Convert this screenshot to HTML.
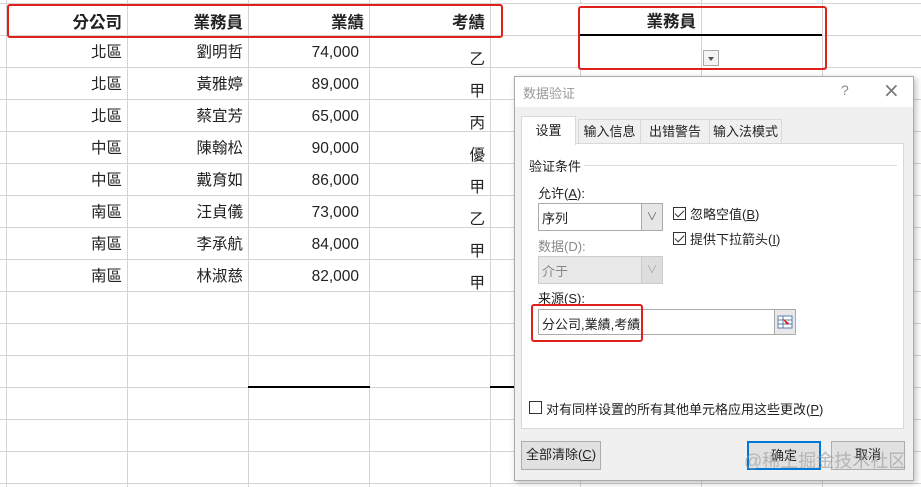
<!DOCTYPE html>
<html><head><meta charset="utf-8"><style>
*{margin:0;padding:0;box-sizing:border-box}
body{width:921px;height:487px;background:#fff;position:relative;overflow:hidden;font-family:"Liberation Sans","Noto Sans CJK TC",sans-serif;color:#222}
.a{position:absolute}
.vl{position:absolute;width:1px;background:#d4d4d4;top:0;height:487px}
.hl{position:absolute;height:1px;background:#d4d4d4;left:0;width:921px}
.c{position:absolute;text-align:right;font-size:15.5px;height:32px;line-height:32px;padding-right:5px}
.h{font-weight:bold;font-size:16.5px}
.d{font-family:"Liberation Sans","Noto Sans CJK SC",sans-serif;font-size:13px;color:#222}
.btn{position:absolute;background:#e1e1e1;border:1px solid #adadad;font-size:13px;text-align:center;line-height:26px}
.cb{position:absolute;width:13px;height:13px;border:1px solid #333;background:#fff}
.cb.k::after{content:"";position:absolute;left:3px;top:0px;width:4px;height:8px;border:solid #333;border-width:0 1.5px 1.5px 0;transform:rotate(45deg)}
.red{position:absolute;border:2.5px solid #e0201b;border-radius:3px}
</style></head><body>
<div class="vl" style="left:6px"></div><div class="vl" style="left:127px"></div><div class="vl" style="left:248px"></div><div class="vl" style="left:369px"></div><div class="vl" style="left:490px"></div><div class="vl" style="left:580px"></div><div class="vl" style="left:701px"></div><div class="vl" style="left:822px"></div>
<div class="hl" style="top:3px"></div><div class="hl" style="top:35px"></div><div class="hl" style="top:67px"></div><div class="hl" style="top:99px"></div><div class="hl" style="top:131px"></div><div class="hl" style="top:163px"></div><div class="hl" style="top:195px"></div><div class="hl" style="top:227px"></div><div class="hl" style="top:259px"></div><div class="hl" style="top:291px"></div><div class="hl" style="top:323px"></div><div class="hl" style="top:355px"></div><div class="hl" style="top:387px"></div><div class="hl" style="top:419px"></div><div class="hl" style="top:451px"></div><div class="hl" style="top:483px"></div>
<div class="a" style="left:248px;top:386px;width:122px;height:2px;background:#000"></div>
<div class="a" style="left:490px;top:386px;width:24px;height:2px;background:#000"></div>
<div class="a" style="left:580px;top:35px;width:242px;height:33px;background:#fff"></div>
<div class="a" style="left:580px;top:4px;width:242px;height:31px;background:#fff"></div>
<div class="a" style="left:701px;top:4px;width:1px;height:64px;background:#d4d4d4"></div>
<div class="a" style="left:580px;top:34px;width:242px;height:2px;background:#000"></div>

<div class="c h" style="left:6px;top:7px;width:121px">分公司</div>
<div class="c h" style="left:127px;top:7px;width:121px">業務員</div>
<div class="c h" style="left:248px;top:7px;width:121px">業績</div>
<div class="c h" style="left:369px;top:7px;width:121px">考績</div>
<div class="c h" style="left:580px;top:6px;width:121px">業務員</div>
<div class="a" style="left:703px;top:50px;width:16px;height:16px;border:1px solid #aaa;background:#f4f4f4"><div class="a" style="left:4px;top:6px;border:3.5px solid transparent;border-top:4px solid #555;border-bottom:0"></div></div>

<div class="c" style="left:6px;top:37px;width:121px">北區</div><div class="c" style="left:127px;top:37px;width:121px">劉明哲</div><div class="c" style="left:248px;top:37px;width:121px;padding-right:10px">74,000</div><div class="c" style="left:369px;top:44px;width:121px">乙</div>
<div class="c" style="left:6px;top:69px;width:121px">北區</div><div class="c" style="left:127px;top:69px;width:121px">黃雅婷</div><div class="c" style="left:248px;top:69px;width:121px;padding-right:10px">89,000</div><div class="c" style="left:369px;top:76px;width:121px">甲</div>
<div class="c" style="left:6px;top:101px;width:121px">北區</div><div class="c" style="left:127px;top:101px;width:121px">蔡宜芳</div><div class="c" style="left:248px;top:101px;width:121px;padding-right:10px">65,000</div><div class="c" style="left:369px;top:108px;width:121px">丙</div>
<div class="c" style="left:6px;top:133px;width:121px">中區</div><div class="c" style="left:127px;top:133px;width:121px">陳翰松</div><div class="c" style="left:248px;top:133px;width:121px;padding-right:10px">90,000</div><div class="c" style="left:369px;top:140px;width:121px">優</div>
<div class="c" style="left:6px;top:165px;width:121px">中區</div><div class="c" style="left:127px;top:165px;width:121px">戴育如</div><div class="c" style="left:248px;top:165px;width:121px;padding-right:10px">86,000</div><div class="c" style="left:369px;top:172px;width:121px">甲</div>
<div class="c" style="left:6px;top:197px;width:121px">南區</div><div class="c" style="left:127px;top:197px;width:121px">汪貞儀</div><div class="c" style="left:248px;top:197px;width:121px;padding-right:10px">73,000</div><div class="c" style="left:369px;top:204px;width:121px">乙</div>
<div class="c" style="left:6px;top:229px;width:121px">南區</div><div class="c" style="left:127px;top:229px;width:121px">李承航</div><div class="c" style="left:248px;top:229px;width:121px;padding-right:10px">84,000</div><div class="c" style="left:369px;top:236px;width:121px">甲</div>
<div class="c" style="left:6px;top:261px;width:121px">南區</div><div class="c" style="left:127px;top:261px;width:121px">林淑慈</div><div class="c" style="left:248px;top:261px;width:121px;padding-right:10px">82,000</div><div class="c" style="left:369px;top:268px;width:121px">甲</div>

<div class="red" style="left:7px;top:4px;width:496px;height:34px"></div>
<div class="red" style="left:578px;top:6px;width:249px;height:64px"></div>

<!-- dialog -->
<div class="a" style="left:514px;top:76px;width:400px;height:405px;background:#f0f0f0;border:1px solid #aaa;box-shadow:2px 2px 6px rgba(0,0,0,.25)">
 <div class="a" style="left:0;top:0;width:398px;height:30px;background:#fff"></div>
 <div class="a d" style="left:8px;top:6px;color:#999;font-size:13px">数据验证</div>
 <div class="a" style="left:326px;top:5px;color:#888;font-size:14px">?</div>
 <div class="a" style="left:368px;top:1px;color:#777;font-size:20px;font-family:'DejaVu Sans'">×</div>
</div>
<div class="a" style="left:521px;top:143px;width:383px;height:286px;background:#fff;border:1px solid #d9d9d9"></div>
<div class="a d" style="left:578px;top:119px;width:63px;height:25px;border:1px solid #d9d9d9;background:#f0f0f0;text-align:center;line-height:23px">输入信息</div>
<div class="a d" style="left:640px;top:119px;width:70px;height:25px;border:1px solid #d9d9d9;background:#f0f0f0;text-align:center;line-height:23px">出错警告</div>
<div class="a d" style="left:709px;top:119px;width:73px;height:25px;border:1px solid #d9d9d9;background:#f0f0f0;text-align:center;line-height:23px">输入法模式</div>
<div class="a d" style="left:521px;top:116px;width:55px;height:29px;border:1px solid #d9d9d9;border-bottom:none;background:#fff;text-align:center;line-height:28px">设置</div>
<div class="a d" style="left:529px;top:156px">验证条件</div>
<div class="a" style="left:584px;top:165px;width:313px;height:1px;background:#ddd"></div>
<div class="a d" style="left:538px;top:183px">允许(<u>A</u>):</div>
<div class="a" style="left:538px;top:203px;width:125px;height:28px;border:1px solid #aaa;background:#fff"><div class="a d" style="left:3px;top:4px">序列</div><div class="a" style="left:102px;top:0;width:21px;height:26px;background:#e6e6e6;border-left:1px solid #aaa;color:#666;font-size:11px;text-align:center;line-height:26px">∨</div></div>
<div class="a d" style="left:538px;top:236px;color:#888">数据(D):</div>
<div class="a" style="left:538px;top:256px;width:125px;height:28px;border:1px solid #ccc;background:#e8e8e8"><div class="a d" style="left:3px;top:4px;color:#888">介于</div><div class="a" style="left:102px;top:0;width:21px;height:26px;background:#ddd;border-left:1px solid #ccc;color:#aaa;font-size:11px;text-align:center;line-height:26px">∨</div></div>
<div class="cb k" style="left:673px;top:207px"></div><div class="a d" style="left:690px;top:204px">忽略空值(<u>B</u>)</div>
<div class="cb k" style="left:673px;top:232px"></div><div class="a d" style="left:690px;top:229px">提供下拉箭头(<u>I</u>)</div>
<div class="a d" style="left:538px;top:288px">来源(<u>S</u>):</div>
<div class="a" style="left:538px;top:309px;width:248px;height:26px;border:1px solid #aaa;background:#fff"><div class="a d" style="left:3px;top:4px">分公司,業績,考績</div></div>
<div class="a" style="left:774px;top:309px;width:22px;height:26px;border:1px solid #aaa;background:#e8e8e8">
<svg width="20" height="24" viewBox="0 0 20 24"><rect x="3" y="6" width="14" height="12" fill="#fff" stroke="#5a7fb0"/><line x1="3" y1="10" x2="17" y2="10" stroke="#5a7fb0"/><line x1="3" y1="14" x2="17" y2="14" stroke="#5a7fb0"/><line x1="8" y1="6" x2="8" y2="18" stroke="#5a7fb0"/><path d="M7 8 L14 13 L12 15 Z" fill="#d22"/></svg></div>
<div class="red" style="left:531px;top:304px;width:112px;height:38px"></div>
<div class="cb" style="left:529px;top:401px"></div><div class="a d" style="left:546px;top:399px">对有同样设置的所有其他单元格应用这些更改(<u>P</u>)</div>
<div class="btn d" style="left:521px;top:441px;width:80px;height:29px">全部清除(<u>C</u>)</div>
<div class="btn d" style="left:747px;top:441px;width:74px;height:29px;border:2px solid #0078d7">确定</div>
<div class="btn d" style="left:831px;top:441px;width:74px;height:29px">取消</div>
<div class="a" style="left:744px;top:447px;font-size:18px;color:rgba(150,150,150,.6);font-family:'Liberation Sans','Noto Sans CJK SC',sans-serif">@稀土掘金技术社区</div>
</body></html>
